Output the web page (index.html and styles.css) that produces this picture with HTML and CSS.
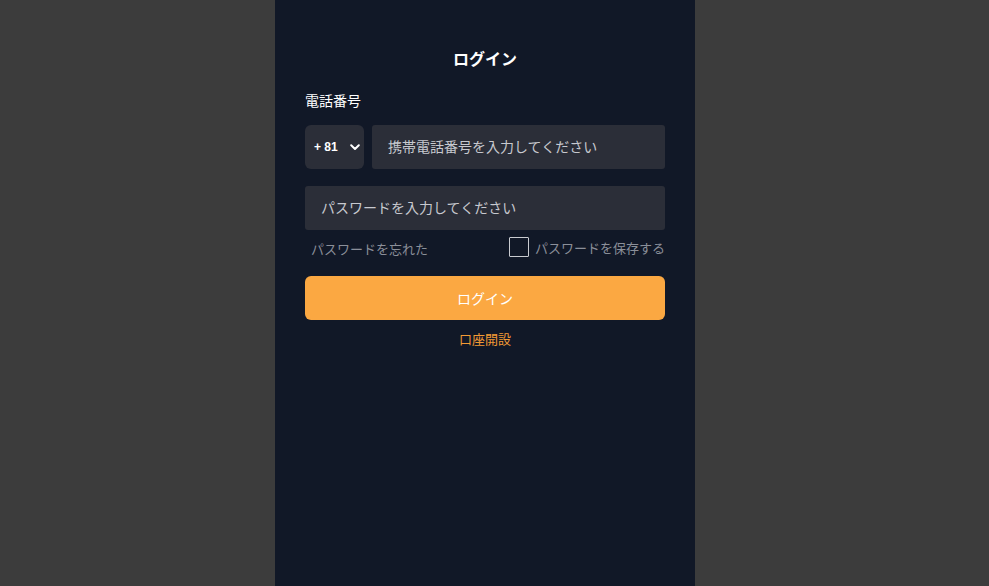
FILE: index.html
```html
<!DOCTYPE html>
<html lang="ja">
<head>
<meta charset="utf-8">
<title>ログイン</title>
<link rel="stylesheet" href="styles.css">
</head>
<body>
<main class="panel">
  <h1 class="title">ログイン</h1>
  <div class="label">電話番号</div>
  <div class="phone-row">
    <div class="code">
      <span>+ 81</span>
      <svg class="chev" width="10" height="7" viewBox="0 0 10 7"><path d="M1.2 1.3 L5 5 L8.8 1.3" fill="none" stroke="#fff" stroke-width="2" stroke-linecap="round" stroke-linejoin="round"/></svg>
    </div>
    <div class="field phone">携帯電話番号を入力してください</div>
  </div>
  <div class="field pass">パスワードを入力してください</div>
  <div class="opts">
    <span class="forgot">パスワードを忘れた</span>
    <label class="save"><span class="box"></span><span>パスワードを保存する</span></label>
  </div>
  <button class="btn">ログイン</button>
  <div class="link">口座開設</div>
</main>
</body>
</html>
```
FILE: styles.css
```css
* { box-sizing: border-box; }
html, body { margin: 0; height: 100%; }
body {
  background: #3c3c3c;
  font-family: "Noto Sans CJK JP", "Noto Sans", sans-serif;
  display: flex;
  justify-content: center;
  padding-right: 19px;
}
.panel {
  width: 420px;
  height: 586px;
  background: #111827;
  padding: 46px 30px 0;
  display: flex;
  flex-direction: column;
}
.title {
  margin: 0;
  text-align: center;
  color: #fff;
  font-size: 16px;
  font-weight: 700;
  line-height: 24px;
}
.label {
  color: #fff;
  font-size: 14px;
  font-weight: 400;
  line-height: 20px;
  margin-top: 20px;
}
.phone-row {
  display: flex;
  gap: 8px;
  margin-top: 15px;
}
.code {
  width: 59px;
  height: 44px;
  background: #2b2e38;
  border-radius: 6px;
  display: flex;
  align-items: center;
  justify-content: space-between;
  padding: 0 4px 0 9px;
  color: #fff;
  font-size: 12px;
  font-weight: 700;
  font-family: "Liberation Sans", Arial, sans-serif;
}
.chev { margin-top: 1px; }
.field {
  height: 44px;
  background: #2b2e38;
  border-radius: 3px;
  color: #c7c9cf;
  font-size: 14px;
  line-height: 43px;
  padding-left: 16px;
}
.phone { flex: 1; }
.pass { margin-top: 17px; }
.opts {
  display: flex;
  justify-content: space-between;
  align-items: center;
  margin-top: 8px;
  height: 20px;
  padding-left: 6px;
  color: #8b8f99;
  font-size: 13px;
}
.save { display: flex; align-items: center; gap: 6px; margin-bottom: 2px; }
.box {
  width: 20px;
  height: 20px;
  border: 1px solid #c9cbd0;
  border-radius: 1px;
}
.btn {
  margin-top: 18px;
  height: 44px;
  border: 0;
  border-radius: 6px;
  background: #fba842;
  color: #fff;
  font-family: inherit;
  font-size: 14px;
  font-weight: 400;
}
.link {
  margin-top: 10px;
  text-align: center;
  color: #f39a34;
  font-size: 13px;
  font-weight: 400;
  line-height: 18px;
}
```
